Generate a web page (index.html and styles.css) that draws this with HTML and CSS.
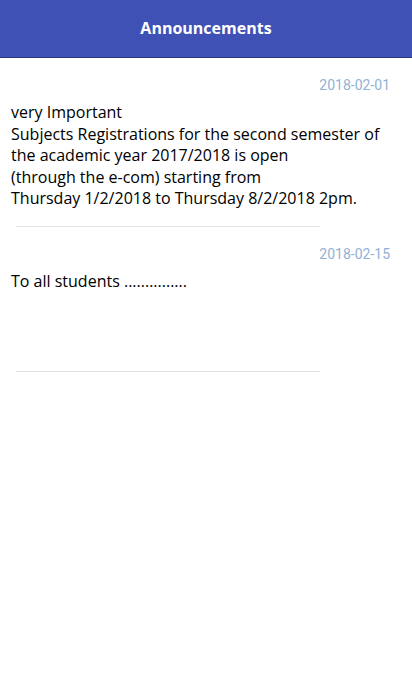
FILE: index.html
```html
<!DOCTYPE html>
<html>
<head>
<meta charset="utf-8">
<link rel="stylesheet" href="styles.css">
</head>
<body>
<header class="bar"><h1 class="title">Announcements</h1></header>
<main class="list">
  <section class="item">
    <div class="date">2018-02-01</div>
    <div class="text">very Important<br>Subjects Registrations for the second semester of the academic year 2017/2018 is open<br>(through the e-com) starting from<br>Thursday 1/2/2018 to Thursday 8/2/2018 2pm.</div>
  </section>
  <hr class="divider">
  <section class="item">
    <div class="date">2018-02-15</div>
    <div class="text">To all students ...............</div>
  </section>
  <hr class="divider">
</main>
</body>
</html>
```

FILE: styles.css
```css
html, body {
  margin: 0;
  padding: 0;
  background: #fff;
}
body {
  font-family: "Open Sans", "Noto Sans", sans-serif;
  width: 412px;
}
.bar {
  height: 57px;
  background: #3f51b5;
  display: flex;
  align-items: center;
  justify-content: center;
  box-shadow: 0 1px 0 #2b3880;
}
.title {
  margin: 0;
  color: #fff;
  font-size: 16px;
  font-weight: 700;
  line-height: 20px;
  padding-bottom: 1px;
}
.list {
  padding-top: 1px;
}
.item {
  padding: 18px 22px 16px 11px;
}
.date {
  text-align: right;
  font-family: Roboto, "Liberation Sans", sans-serif;
  font-size: 14px;
  line-height: 18px;
  color: #8fb2d6;
}
.text {
  margin-top: 8px;
  font-size: 16px;
  line-height: 21.5px;
  color: #000;
  min-height: 84px;
}
.divider {
  margin: 0 0 0 16px;
  width: 304px;
  border: 0;
  height: 1px;
  background: #e3e3e3;
}
```
